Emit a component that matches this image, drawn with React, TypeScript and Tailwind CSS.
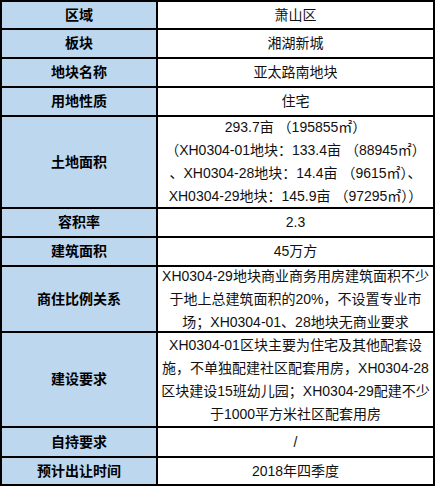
const rows = [
  { label: "区域", lines: ["萧山区"], h: "h-[26px]" },
  { label: "板块", lines: ["湘湖新城"], h: "h-[27px]" },
  { label: "地块名称", lines: ["亚太路南地块"], h: "h-[27px]" },
  { label: "用地性质", lines: ["住宅"], h: "h-[27px]" },
  {
    label: "土地面积",
    lines: [
      "293.7亩 （195855㎡）",
      "（XH0304-01地块：133.4亩 （88945㎡）",
      "、XH0304-28地块：14.4亩 （9615㎡）、",
      "XH0304-29地块：145.9亩 （97295㎡））",
    ],
    h: "h-[90px]",
  },
  { label: "容积率", lines: ["2.3"], h: "h-[27px]" },
  { label: "建筑面积", lines: ["45万方"], h: "h-[27px]" },
  {
    label: "商住比例关系",
    lines: [
      "XH0304-29地块商业商务用房建筑面积不少",
      "于地上总建筑面积的20%，不设置专业市",
      "场；XH0304-01、28地块无商业要求",
    ],
    h: "h-[64px]",
  },
  {
    label: "建设要求",
    lines: [
      "XH0304-01区块主要为住宅及其他配套设",
      "施，不单独配建社区配套用房，XH0304-28",
      "区块建设15班幼儿园；XH0304-29配建不少",
      "于1000平方米社区配套用房",
    ],
    h: "h-[93px]",
  },
  { label: "自持要求", lines: ["/"], h: "h-[28px]" },
  { label: "预计出让时间", lines: ["2018年四季度"], h: "h-[26px]" },
]

export default function App() {
  return (
    <div className="min-h-screen bg-white font-['Liberation_Sans','Noto_Sans_CJK_SC',sans-serif] text-black">
      <div className="grid w-[435px] grid-cols-[154px_1fr] gap-[2px] border-2 border-black bg-black">
        {rows.map((row) => (
          <div key={row.label} className="contents">
            <div
              className={`${row.h} flex items-center justify-center bg-[#bdd7ee] text-[14px] font-bold`}
            >
              {row.label}
            </div>
            <div
              className={`${row.h} flex flex-col items-center justify-center bg-white text-[14px] leading-[23px] text-[#111]`}
            >
              {row.lines.map((line) => (
                <div key={line} className="whitespace-nowrap">
                  {line}
                </div>
              ))}
            </div>
          </div>
        ))}
      </div>
    </div>
  )
}
